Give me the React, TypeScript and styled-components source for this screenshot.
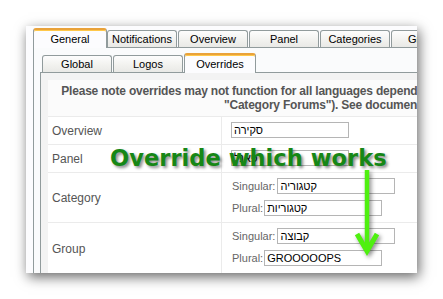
import React from "react";
import styled, { createGlobalStyle } from "styled-components";

const GlobalStyle = createGlobalStyle`
  html, body { margin: 0; padding: 0; background: #ffffff; }
  body { font-family: "Liberation Sans", Arial, sans-serif; }
`;

const Stage = styled.div`
  width: 443px;
  height: 299px;
  padding: 26px 0 0 26px;
  box-sizing: border-box;
  overflow: hidden;
  background: #ffffff;
`;

const Window = styled.div`
  position: relative;
  width: 391px;
  height: 247px;
  overflow: hidden;
  background: #fcfcfe;
  box-shadow: 2px 4px 12px rgba(0, 0, 0, 0.6);
`;

const Page = styled.div`
  width: 660px;
  padding: 2px 0 0 7px;
`;

const TabRow = styled.div<{ $h: number; $indent?: number }>`
  display: flex;
  align-items: flex-end;
  height: ${(p) => p.$h}px;
  margin-bottom: -1px;
  padding-left: ${(p) => p.$indent ?? 0}px;
  position: relative;
  z-index: 1;
`;

const Tab = styled.div<{ $active?: boolean; $w?: number }>`
  box-sizing: border-box;
  flex: none;
  width: ${(p) => p.$w ?? 70}px;
  height: ${(p) => (p.$active ? 20 : 17)}px;
  margin-bottom: ${(p) => (p.$active ? 0 : 1)}px;
  margin-right: ${(p) => (p.$active ? 0 : 1)}px;
  display: flex;
  align-items: center;
  justify-content: center;
  font-size: 11px;
  color: #000;
  border: 1px solid #919b9c;
  border-bottom: none;
  border-radius: 3px 3px 0 0;
  background: ${(p) =>
    p.$active ? "#fcfcfe" : "linear-gradient(#fdfdfd, #f1f1ee 60%, #e9e9e6)"};
  ${(p) =>
    p.$active &&
    `border-top: 2px solid #e9a23a; box-shadow: inset 0 1px 0 #ffc84a; padding-bottom: 1px;`}
  white-space: nowrap;
`;

const OuterPanel = styled.div`
  border-left: 1px solid #919b9c;
  border-top: 1px solid #919b9c;
  background: #fafbfc;
  padding: 4px 0 0 6px;
`;

const InnerPanel = styled.div`
  border-left: 1px solid #919b9c;
  border-top: 1px solid #919b9c;
  background: #f3f3f3;
  padding: 7px 0 0 7px;
`;

const Content = styled.div`
  width: 610px;
  background: #ffffff;
`;

const Notice = styled.div`
  box-sizing: border-box;
  height: 36px;
  padding-top: 4px;
  background: #fbfbfb;
  text-align: center;
  font-size: 12px;
  font-weight: bold;
  line-height: 14px;
  letter-spacing: -0.2px;
  color: #555;
  white-space: nowrap;
`;

const Row = styled.div<{ $h: number }>`
  box-sizing: border-box;
  display: grid;
  grid-template-columns: 174px 1fr;
  height: ${(p) => p.$h}px;
  border-top: 1px solid #ebebeb;
`;

const Label = styled.div`
  display: flex;
  align-items: center;
  padding-left: 4px;
  border-right: 1px solid #ebebeb;
  font-size: 12px;
  color: #555;
`;

const Value = styled.div`
  display: flex;
  flex-direction: column;
  gap: 6px;
  padding: 5px 0 0 9px;
`;

const Field = styled.div`
  display: flex;
  align-items: center;
  padding-left: 1px;
`;

const FieldLabel = styled.span<{ $gap?: number }>`
  font-size: 11px;
  color: #666;
  margin-right: ${(p) => p.$gap ?? 1}px;
`;

const Input = styled.input`
  box-sizing: border-box;
  width: 118px;
  height: 16px;
  margin: 0;
  padding: 0 2px;
  border: 1px solid #b5b5b5;
  background: #fff;
  font-family: "Liberation Sans", Arial, sans-serif;
  font-size: 11px;
  color: #000;
  outline: none;
`;

const Callout = styled.div`
  position: absolute;
  left: 84px;
  top: 121px;
  font-family: "DejaVu Sans", Verdana, sans-serif;
  font-weight: bold;
  font-size: 22.6px;
  line-height: 1;
  color: #168716;
  white-space: nowrap;
  text-shadow: 2px 2px 3px rgba(0, 0, 0, 0.45);
`;

const Arrow = styled.svg`
  position: absolute;
  left: 324px;
  top: 139px;
  overflow: visible;
  filter: drop-shadow(2px 2px 2px rgba(0, 0, 0, 0.45));
`;

export default function App() {
  const top = [
    { t: "General", active: true, w: 74 },
    { t: "Notifications" },
    { t: "Overview" },
    { t: "Panel" },
    { t: "Categories" },
    { t: "Groups" },
  ];
  const sub = [{ t: "Global" }, { t: "Logos" }, { t: "Overrides", active: true, w: 72 }];
  return (
    <>
      <GlobalStyle />
      <Stage>
        <Window>
          <Page>
            <TabRow $h={20}>
              {top.map((x) => (
                <Tab key={x.t} $active={x.active} $w={x.w}>
                  {x.t}
                </Tab>
              ))}
            </TabRow>
            <OuterPanel>
              <TabRow $h={21} $indent={2}>
                {sub.map((x) => (
                  <Tab key={x.t} $active={x.active} $w={x.w}>
                    {x.t}
                  </Tab>
                ))}
              </TabRow>
              <InnerPanel>
                <Content>
                  <Notice>
                    Please note overrides may not function for all languages depending on the forum module being used (e.g.
                    <br />
                    "Category Forums"). See documentation page.
                  </Notice>
                  <Row $h={28}>
                    <Label>Overview</Label>
                    <Value>
                      <Input defaultValue="סקירה" readOnly />
                    </Value>
                  </Row>
                  <Row $h={28}>
                    <Label>Panel</Label>
                    <Value>
                      <Input defaultValue="פאנל" readOnly />
                    </Value>
                  </Row>
                  <Row $h={50}>
                    <Label>Category</Label>
                    <Value>
                      <Field>
                        <FieldLabel $gap={2}>Singular:</FieldLabel>
                        <Input defaultValue="קטגוריה" readOnly />
                      </Field>
                      <Field>
                        <FieldLabel>Plural:</FieldLabel>
                        <Input defaultValue="קטגוריות" readOnly />
                      </Field>
                    </Value>
                  </Row>
                  <Row $h={52}>
                    <Label>Group</Label>
                    <Value>
                      <Field>
                        <FieldLabel $gap={2}>Singular:</FieldLabel>
                        <Input defaultValue="קבוצה" readOnly />
                      </Field>
                      <Field>
                        <FieldLabel>Plural:</FieldLabel>
                        <Input defaultValue="GROOOOOPS" readOnly />
                      </Field>
                    </Value>
                  </Row>
                </Content>
              </InnerPanel>
            </OuterPanel>
          </Page>
          <Callout>Override which works</Callout>
          <Arrow width="40" height="95" viewBox="0 0 40 95">
            <line x1="17" y1="5" x2="17" y2="84" stroke="#4ff010" strokeWidth="4.5" />
            <polyline
              points="7,69 17,86 27,69"
              fill="none"
              stroke="#4ff010"
              strokeWidth="5"
              strokeLinejoin="miter"
              strokeLinecap="butt"
            />
          </Arrow>
        </Window>
      </Stage>
    </>
  );
}
